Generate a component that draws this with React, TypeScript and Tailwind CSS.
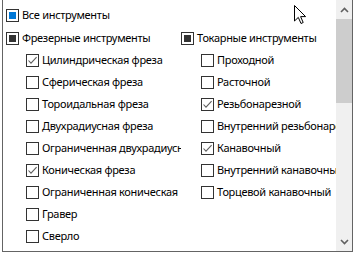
import React from "react";

type BoxState = "off" | "on" | "mixed" | "focus";

const Box = ({ state }: { state: BoxState }) => (
  <span className="w-[13px] h-[13px] border border-[#333333] bg-white flex items-center justify-center shrink-0">
    {state === "on" && (
      <svg width="11" height="11" viewBox="0 0 11 11">
        <path d="M1.5 5.5 L4 8.2 L9.6 2.2" stroke="#5f5f5f" strokeWidth="1.1" fill="none" />
      </svg>
    )}
    {state === "mixed" && <span className="w-[7px] h-[7px] bg-[#333333]" />}
    {state === "focus" && <span className="w-[7px] h-[7px] bg-[#0078d7]" />}
  </span>
);

const Row = ({ label, state, child }: { label: string; state: BoxState; child?: boolean }) => (
  <div className={`h-[22px] flex items-center gap-[3px] whitespace-nowrap ${child ? "pl-[20px]" : ""}`}>
    <Box state={state} />
    <span>{label}</span>
  </div>
);

const mill: [string, BoxState][] = [
  ["Цилиндрическая фреза", "on"],
  ["Сферическая фреза", "off"],
  ["Тороидальная фреза", "off"],
  ["Двухрадиусная фреза", "off"],
  ["Ограниченная двухрадиусная фреза", "off"],
  ["Коническая фреза", "on"],
  ["Ограниченная коническая", "off"],
  ["Гравер", "off"],
  ["Сверло", "off"],
];

const turn: [string, BoxState][] = [
  ["Проходной", "off"],
  ["Расточной", "off"],
  ["Резьбонарезной", "on"],
  ["Внутренний резьбонарезной", "off"],
  ["Канавочный", "on"],
  ["Внутренний канавочный", "off"],
  ["Торцевой канавочный", "off"],
];

export default function App() {
  return (
    <div
      className="relative w-[354px] h-[254px] bg-white overflow-hidden text-[11px] tracking-[-0.3px] text-black"
      style={{ fontFamily: '"Noto Sans", sans-serif' }}
    >
      <div className="ml-[2px] w-[351px] h-[252px] border-l border-r border-b border-[#646464] bg-white flex">
        <div className="flex-1 overflow-hidden pl-[3px] pt-[4px]">
          <Row label="Все инструменты" state="focus" />
          <div className="grid grid-cols-[175px_175px] mt-[1px]">
            <div className="overflow-hidden">
              <Row label="Фрезерные инструменты" state="mixed" />
              {mill.map(([l, s]) => (
                <Row key={l} label={l} state={s} child />
              ))}
            </div>
            <div>
              <Row label="Токарные инструменты" state="mixed" />
              {turn.map(([l, s]) => (
                <Row key={l} label={l} state={s} child />
              ))}
            </div>
          </div>
        </div>
        <div className="w-[16px] bg-[#f0f0f0] flex flex-col items-center">
          <div className="h-[19px] w-full flex items-center justify-center">
            <svg width="9" height="6" viewBox="0 0 9 6">
              <path d="M1 5 L4.5 1.5 L8 5" stroke="#606060" strokeWidth="1.6" fill="none" />
            </svg>
          </div>
          <div className="w-full h-[84px] bg-[#cdcdcd]" />
          <div className="flex-1" />
          <div className="h-[19px] w-full flex items-center justify-center">
            <svg width="9" height="6" viewBox="0 0 9 6">
              <path d="M1 1 L4.5 4.5 L8 1" stroke="#606060" strokeWidth="1.6" fill="none" />
            </svg>
          </div>
        </div>
      </div>
      <svg className="absolute left-[294px] top-[5px]" width="13" height="20" viewBox="0 0 13 20">
        <path
          d="M0.5 0.5 L0.5 16 L4.3 12.4 L7 18.5 L9.2 17.5 L6.6 11.6 L11.6 11.6 Z"
          fill="white"
          stroke="black"
          strokeWidth="1"
          strokeLinejoin="round"
        />
      </svg>
    </div>
  );
}
